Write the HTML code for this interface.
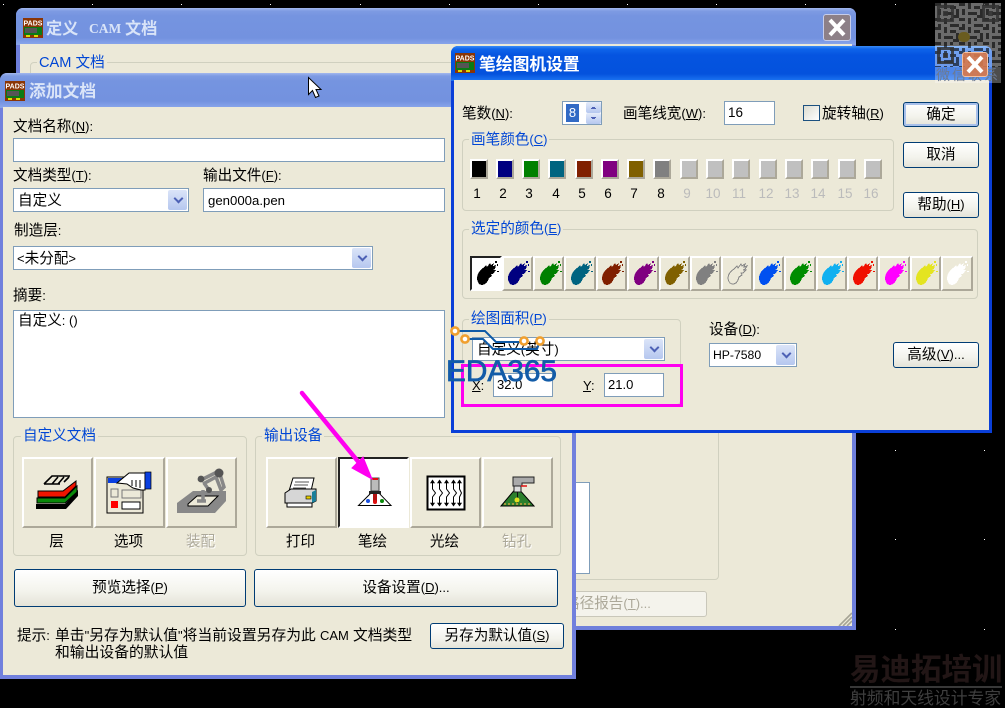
<!DOCTYPE html>
<html lang="zh"><head><meta charset="utf-8"><title>笔绘图机设置</title>
<style>
html,body{margin:0;padding:0;background:#000;}
body{position:relative;width:1005px;height:708px;overflow:hidden;font-family:"Liberation Sans","WenQuanYi Zen Hei","Noto Sans CJK SC",sans-serif;font-size:14.6px;color:#000;}
div,span.t,svg.a{position:absolute;box-sizing:border-box;}
.t{position:absolute;white-space:nowrap;line-height:18px;margin-top:1px;}
.g{color:#0046d5;background:#ece9d8;padding:0 2px;}
.gb{border:1px solid #d0d0bf;border-radius:4px;}
.w{background:#ece9d8;}
.i{background:#fff;border:1px solid #7f9db9;}
.b{border:1px solid #003c74;border-radius:3px;background:linear-gradient(#fff,#f3f3ec 60%,#e4e3d8);text-align:center;line-height:24px;}
.d{background:linear-gradient(#dbe4f8,#b5c7ef);border-radius:2px;}
.d:after{content:"";position:absolute;left:50%;top:50%;width:5px;height:5px;margin:-5px 0 0 -3px;border-right:2px solid #4d61b5;border-bottom:2px solid #4d61b5;transform:rotate(45deg);}
.ib{background:#ece9d8;border:2px solid;border-color:#fff #aca899 #aca899 #fff;}
.sel{background:#fff;border-color:#222 #fff #fff #222;}
.c{text-align:center;}
i{font-style:normal;font-size:13px;}
u{text-decoration:underline;}
.sw{width:18px;height:20px;border:2px solid;border-color:#fff #aca899 #aca899 #fff;}
.n{width:26px;text-align:center;top:184px;font-size:13.500px;}
.bt{font-size:16.2px;font-weight:bold;color:#d9e4f8;}
</style></head><body>

<svg class="a" style="left:0;top:0" width="1005" height="708"><path stroke="#fff" stroke-width="1" d="M3 4.5h1M92 4.5h1M181 4.5h1M270 4.5h1M360 4.5h1M449 4.5h1M538 4.5h1M627 4.5h1M716 4.5h1M805 4.5h1M895 4.5h1M984 4.5h1M895 450.5h1M984 450.5h1M895 539.5h1M984 539.5h1M895 629.5h1M984 629.5h1"/></svg>

<!-- back window -->
<div style="left:16px;top:8px;width:840px;height:622px;background:#6e7fdb;border-radius:7px 7px 0 0;"></div>
<div style="left:16px;top:8px;width:840px;height:37px;border-radius:7px 7px 0 0;background:linear-gradient(#a3b8ee 0,#7e9be3 3px,#7594e0 8px,#7392df 30px,#87a4ea 36px);"></div>
<div class="w" style="left:20px;top:44px;width:832px;height:582px;"></div>
<svg class="a" style="left:23px;top:18px" width="20" height="20"><rect width="20" height="20" fill="#8a3505"/><rect y="9" x="1" width="18" height="8" fill="#0a7a14"/><rect x="2" y="10" width="12" height="5" fill="#555"/><rect x="3" y="17" width="4" height="2" fill="#dd0"/><rect x="11" y="17" width="4" height="2" fill="#dd0"/><text x="10" y="7.5" font-size="7" font-family="Liberation Sans" font-weight="bold" fill="#fff" text-anchor="middle">PADS</text></svg>
<span class="t bt" style="left:46px;top:19px;">定义</span>
<span class="t bt" style="left:89px;top:19px;font-family:'Liberation Serif',serif;font-size:13.500px;">CAM</span>
<span class="t bt" style="left:125px;top:19px;">文档</span>
<div style="left:823px;top:14px;width:28px;height:27px;background:#8d8088;border:1px solid #c7cdea;border-radius:3px;"></div>
<svg class="a" style="left:823px;top:14px" width="28" height="27"><path d="M7 6L21 21M21 6L7 21" stroke="#fff" stroke-width="4"/></svg>
<div class="gb" style="left:30px;top:62px;width:689px;height:518px;"></div>
<span class="t g" style="left:37px;top:53px;">CAM 文档</span>
<div class="i" style="left:540px;top:482px;width:50px;height:92px;"></div>
<div style="left:540px;top:591px;width:167px;height:26px;background:#f4f3ec;border:1px solid #c9c7ba;border-radius:3px;"></div>
<span class="t" style="left:565px;top:594px;color:#aca899;">路径报告<i>(<u>T</u>)...</i></span>
<svg class="a" style="left:838px;top:612px" width="14" height="14"><path d="M14 1L1 14M14 5L5 14M14 9L9 14" stroke="#a5a395" stroke-width="1.6"/></svg>

<!-- left window -->
<div style="left:0;top:73px;width:576px;height:606px;background:#7180dd;border-radius:7px 7px 0 0;"></div>
<div style="left:0;top:73px;width:576px;height:35px;border-radius:7px 7px 0 0;background:linear-gradient(#a3b8ee 0,#7e9be3 3px,#7594e0 8px,#7392df 28px,#87a4ea 34px);"></div>
<div class="w" style="left:3px;top:107px;width:569px;height:568px;"></div>
<svg class="a" style="left:5px;top:81px" width="20" height="20"><rect width="20" height="20" fill="#8a3505"/><rect y="9" x="1" width="18" height="8" fill="#0a7a14"/><rect x="2" y="10" width="12" height="5" fill="#555"/><rect x="3" y="17" width="4" height="2" fill="#dd0"/><rect x="11" y="17" width="4" height="2" fill="#dd0"/><text x="10" y="7.5" font-size="7" font-family="Liberation Sans" font-weight="bold" fill="#fff" text-anchor="middle">PADS</text></svg>
<span class="t" style="left:29px;top:82px;font-size:16.8px;font-weight:bold;color:#dbe5f8;">添加文档</span>

<span class="t" style="left:13px;top:117px;">文档名称<i>(<u>N</u>):</i></span>
<div class="i" style="left:13px;top:138px;width:432px;height:24px;"></div>
<span class="t" style="left:13px;top:166px;">文档类型<i>(<u>T</u>):</i></span>
<div class="i" style="left:13px;top:188px;width:176px;height:24px;"></div>
<span class="t" style="left:18px;top:191px;">自定义</span>
<div class="d" style="left:168px;top:190px;width:19px;height:20px;"></div>
<span class="t" style="left:203px;top:166px;">输出文件<i>(<u>F</u>):</i></span>
<div class="i" style="left:203px;top:188px;width:242px;height:24px;"></div>
<span class="t" style="left:208px;top:191px;font-size:13.2px;">gen000a.pen</span>
<span class="t" style="left:14px;top:221px;">制造层<i>:</i></span>
<div class="i" style="left:13px;top:246px;width:360px;height:24px;"></div>
<span class="t" style="left:17px;top:249px;"><i>&lt;</i>未分配<i>&gt;</i></span>
<div class="d" style="left:352px;top:248px;width:19px;height:20px;"></div>
<span class="t" style="left:13px;top:286px;">摘要<i>:</i></span>
<div class="i" style="left:13px;top:310px;width:432px;height:108px;"></div>
<span class="t" style="left:18px;top:311px;">自定义<i>: ()</i></span>

<div class="gb" style="left:13px;top:436px;width:234px;height:120px;"></div>
<span class="t g" style="left:21px;top:426px;">自定义文档</span>
<div class="gb" style="left:255px;top:436px;width:306px;height:120px;"></div>
<span class="t g" style="left:262px;top:426px;">输出设备</span>

<div class="ib" style="left:22px;top:457px;width:71px;height:71px;"></div>
<div class="ib" style="left:94px;top:457px;width:71px;height:71px;"></div>
<div class="ib" style="left:166px;top:457px;width:71px;height:71px;"></div>
<div class="ib" style="left:266px;top:457px;width:71px;height:71px;"></div>
<div class="ib sel" style="left:338px;top:457px;width:71px;height:71px;"></div>
<div class="ib" style="left:410px;top:457px;width:71px;height:71px;"></div>
<div class="ib" style="left:482px;top:457px;width:71px;height:71px;"></div>

<svg class="a" style="left:0;top:0" width="1005" height="708">
<!-- layers -->
<path d="M36 504H65L78 490V496L66 509H36Z" fill="#000"/>
<path d="M37 498H65L77 486V492L65 503H37Z" fill="#0a8a0a" stroke="#000"/>
<path d="M38 491H63L76 481V486L65 497H38Z" fill="#f01400" stroke="#000"/>
<path d="M44 484l8-8h18M52 484l6-7M58 484l6-7M64 482l5-5M44 484h16" fill="none" stroke="#000" stroke-width="1.6"/>
<!-- options -->
<rect x="107" y="477" width="36" height="36" fill="#ece9d8" stroke="#000"/>
<rect x="108" y="478" width="14" height="5" fill="#0a3fe0"/>
<rect x="111" y="489" width="7" height="8" fill="none" stroke="#777"/>
<rect x="122" y="490" width="19" height="8" fill="none" stroke="#777"/>
<rect x="111" y="501" width="7" height="7" fill="#f00"/>
<rect x="122" y="502" width="18" height="7" fill="#fff" stroke="#000"/>
<path d="M117 483L129 473H145V490H141L133 488L127 484Z" fill="#fff" stroke="#000"/>
<path d="M132 480v6M136 480v7M140 480v8" stroke="#000"/>
<rect x="145" y="472" width="6" height="17" fill="#0a3fe0" stroke="#000" stroke-width=".7"/>
<!-- assembly -->
<path d="M177 513V503L193 491H226V501L215 513Z" fill="#888"/>
<path d="M188 504L197 496H218L208 506H188Z" fill="#ece9d8" stroke="#000"/>
<path d="M201 480L219 471L224 487L221 490L216 477L203 484M204 483L209 490M203 490V501M197 501H206" stroke="#888" stroke-width="3.5" fill="none"/>
<circle cx="219" cy="473" r="4.5" fill="#555"/><circle cx="201" cy="479" r="3.4" fill="#555"/><circle cx="209" cy="490" r="3" fill="#555"/>
<!-- printer -->
<path d="M293 478H314L311 491H289Z" fill="#fff" stroke="#000"/>
<path d="M295 482h14M294 485h14M293 488h13" stroke="#555"/>
<path d="M285 493L291 489H316V501L312 503H285Z" fill="#d6d6d6" stroke="#000"/>
<path d="M312 492l4-2V501l-4 2Z" fill="#1a7f9a"/>
<rect x="306" y="496" width="5" height="3" fill="#e8d000" stroke="#000" stroke-width=".6"/>
<rect x="287" y="503" width="25" height="4" fill="#fff" stroke="#000"/>
<!-- pen -->
<path d="M358.500 505.500H391L375 489Z" fill="#fff" stroke="#000"/>
<rect x="371" y="478" width="8" height="13" fill="#bbb" stroke="#444"/>
<rect x="372" y="478" width="6" height="2" fill="#e01010"/>
<rect x="369" y="491" width="12" height="3" fill="#222"/>
<rect x="373" y="494" width="4" height="8" fill="#b01010"/>
<circle cx="368" cy="501" r="2" fill="#1a50e0"/><circle cx="375" cy="502" r="2" fill="#e01010"/><circle cx="382" cy="501" r="2" fill="#0a8a0a"/>
<!-- photo -->
<rect x="427.500" y="476.500" width="37" height="33" fill="#fff" stroke="#000" stroke-width="2"/>
<path d="M432.500 481v8l3 4-3 4v8M439.500 481v8l3 4-3 4v8M446.500 481v8l3 4-3 4v8M453.500 481v8l3 4-3 4v8M459.500 481v8l2 4-2 4v8" fill="none" stroke="#000"/>
<path d="M430.500 483l2-3 2 3ZM437.500 483l2-3 2 3ZM444.500 483l2-3 2 3ZM451.500 483l2-3 2 3ZM457.500 483l2-3 2 3ZM430.500 503l2 3 2-3ZM437.500 503l2 3 2-3ZM444.500 503l2 3 2-3ZM451.500 503l2 3 2-3ZM457.500 503l2 3 2-3Z" fill="#000" stroke="#000" stroke-width=".6"/>
<!-- drill -->
<path d="M501 506L517 487L534 506Z" fill="#2c7f2c" stroke="#000"/>
<path d="M504 504h26" stroke="#c9a040" stroke-dasharray="2 2" stroke-width="1.500"/>
<path d="M513 477H534V483H522V486H513Z" fill="#aaa" stroke="#222"/>
<rect x="514" y="486" width="7" height="6" fill="#ddd" stroke="#222"/>
<path d="M521 486h6" stroke="#e01010" stroke-width="1.500"/>
<path d="M517.500 492V503" stroke="#111"/>
<circle cx="517" cy="500" r="2.500" fill="#e0e020"/>
</svg>

<span class="t c" style="left:21px;top:532px;width:71px;">层</span>
<span class="t c" style="left:93px;top:532px;width:71px;">选项</span>
<span class="t c" style="left:165px;top:532px;width:71px;color:#aca899;text-shadow:1px 1px #fff;">装配</span>
<span class="t c" style="left:265px;top:532px;width:71px;">打印</span>
<span class="t c" style="left:337px;top:532px;width:71px;">笔绘</span>
<span class="t c" style="left:409px;top:532px;width:71px;">光绘</span>
<span class="t c" style="left:481px;top:532px;width:71px;color:#aca899;text-shadow:1px 1px #fff;">钻孔</span>

<div class="b" style="left:14px;top:569px;width:232px;height:38px;line-height:36px;">预览选择<i>(<u>P</u>)</i></div>
<div class="b" style="left:254px;top:569px;width:304px;height:38px;line-height:36px;">设备设置<i>(<u>D</u>)...</i></div>
<span class="t" style="left:17px;top:626px;">提示<i>:</i></span>
<span class="t" style="left:55px;top:626px;font-size:14.8px;">单击<i>"</i>另存为默认值<i>"</i>将当前设置另存为此 <i>CAM</i> 文档类型</span>
<span class="t" style="left:55px;top:643px;font-size:14.8px;">和输出设备的默认值</span>
<div class="b" style="left:430px;top:623px;width:134px;height:26px;">另存为默认值<i>(<u>S</u>)</i></div>

<!-- right window -->
<div style="left:451px;top:46px;width:541px;height:387px;background:#0a3fd8;border-radius:7px 7px 0 0;"></div>
<div style="left:451px;top:46px;width:541px;height:35px;border-radius:7px 7px 0 0;background:linear-gradient(#3a8cf5 0,#0f64ea 3px,#0554e0 9px,#0452dd 28px,#1a70f0 34px);"></div>
<div class="w" style="left:454px;top:80px;width:535px;height:350px;"></div>
<svg class="a" style="left:455px;top:53px" width="20" height="20"><rect width="20" height="20" fill="#8a3505"/><rect y="9" x="1" width="18" height="8" fill="#0a7a14"/><rect x="2" y="10" width="12" height="5" fill="#555"/><rect x="3" y="17" width="4" height="2" fill="#dd0"/><rect x="11" y="17" width="4" height="2" fill="#dd0"/><text x="10" y="7.5" font-size="7" font-family="Liberation Sans" font-weight="bold" fill="#fff" text-anchor="middle">PADS</text></svg>
<span class="t" style="left:479px;top:55px;font-size:16.8px;font-weight:bold;color:#fff;">笔绘图机设置</span>

<span class="t" style="left:462px;top:104px;">笔数<i>(<u>N</u>):</i></span>
<div class="i" style="left:562px;top:101px;width:40px;height:24px;"></div>
<div style="left:566px;top:104px;width:13px;height:18px;background:#316ac5;color:#fff;text-align:center;line-height:18px;font-size:13px;">8</div>
<div style="left:586px;top:102px;width:15px;height:11px;background:linear-gradient(#e4ebfa,#b5c7ef);border-radius:2px;"></div>
<div style="left:586px;top:113px;width:15px;height:11px;background:linear-gradient(#e4ebfa,#b5c7ef);border-radius:2px;"></div>
<svg class="a" style="left:586px;top:102px" width="15" height="22"><path d="M5 6.500h5M6 5.500h3M5 15.500h5M6 16.500h3" stroke="#4d61b5"/></svg>
<span class="t" style="left:623px;top:104px;">画笔线宽<i>(<u>W</u>):</i></span>
<div class="i" style="left:724px;top:101px;width:51px;height:24px;"></div>
<span class="t" style="left:728px;top:103px;font-size:13.500px;">16</span>
<div style="left:803px;top:105px;width:17px;height:16px;border:1px solid #1c5180;background:linear-gradient(135deg,#dcdcd0,#fff);"></div>
<span class="t" style="left:822px;top:104px;">旋转轴<i>(<u>R</u>)</i></span>
<div class="b" style="left:903px;top:102px;width:76px;height:25px;box-shadow:inset 0 0 0 2px #a8c0ea;">确定</div>
<div class="b" style="left:903px;top:142px;width:76px;height:26px;">取消</div>
<div class="b" style="left:903px;top:192px;width:76px;height:26px;">帮助<i>(<u>H</u>)</i></div>

<div class="gb" style="left:462px;top:139px;width:432px;height:72px;"></div>
<span class="t g" style="left:469px;top:130px;">画笔颜色<i>(<u>C</u>)</i></span>
<div class="sw" style="left:470px;top:159px;background:#000;"></div>
<div class="sw" style="left:496px;top:159px;background:#000080;"></div>
<div class="sw" style="left:522px;top:159px;background:#008000;"></div>
<div class="sw" style="left:548px;top:159px;background:#006480;"></div>
<div class="sw" style="left:575px;top:159px;background:#802000;"></div>
<div class="sw" style="left:601px;top:159px;background:#800080;"></div>
<div class="sw" style="left:627px;top:159px;background:#806000;"></div>
<div class="sw" style="left:653px;top:159px;background:#808080;"></div>
<div class="sw" style="left:680px;top:159px;background:#c0c0c0;"></div>
<div class="sw" style="left:706px;top:159px;background:#c0c0c0;"></div>
<div class="sw" style="left:732px;top:159px;background:#c0c0c0;"></div>
<div class="sw" style="left:759px;top:159px;background:#c0c0c0;"></div>
<div class="sw" style="left:785px;top:159px;background:#c0c0c0;"></div>
<div class="sw" style="left:811px;top:159px;background:#c0c0c0;"></div>
<div class="sw" style="left:838px;top:159px;background:#c0c0c0;"></div>
<div class="sw" style="left:864px;top:159px;background:#c0c0c0;"></div>
<span class="t n" style="left:464px;">1</span><span class="t n" style="left:490px;">2</span><span class="t n" style="left:516px;">3</span><span class="t n" style="left:543px;">4</span><span class="t n" style="left:569px;">5</span><span class="t n" style="left:595px;">6</span><span class="t n" style="left:621px;">7</span><span class="t n" style="left:648px;">8</span>
<span class="t n" style="left:674px;color:#bbb;">9</span><span class="t n" style="left:700px;color:#bbb;">10</span><span class="t n" style="left:726px;color:#bbb;">11</span><span class="t n" style="left:753px;color:#bbb;">12</span><span class="t n" style="left:779px;color:#bbb;">13</span><span class="t n" style="left:805px;color:#bbb;">14</span><span class="t n" style="left:832px;color:#bbb;">15</span><span class="t n" style="left:858px;color:#bbb;">16</span>

<div class="gb" style="left:462px;top:229px;width:516px;height:70px;"></div>
<span class="t g" style="left:469px;top:219px;">选定的颜色<i>(<u>E</u>)</i></span>

<svg width="0" height="0" style="position:absolute"><defs>
<path id="m" d="M5 21C5 17 8 13 11 11L14 8L15 10L18 6L19 8L22 6L21 9L24 8L23 12L21 13L24 13L21 17L19 17L20 19L17 21C16 25 13 28 10 28C7 28 5 25 5 21ZM23 4h2v2h-2ZM25 7h1v2h-1ZM25 14h2v1h-2Z" fill="currentColor"/>
<path id="mo" d="M5 21C5 17 8 14 11 12L14 9L15 11L18 7L19 9L22 7L21 10L24 9L22 12L20 13L23 13L20 16L18 16L19 18L16 20C15 24 13 27 10 27C7 27 5 24 5 21Z" fill="none" stroke="#888"/>
</defs></svg>
<div class="ib sel" style="left:470px;top:256px;width:32px;height:35px;"></div>
<div class="ib" style="left:502px;top:256px;width:31px;height:35px;"></div>
<div class="ib" style="left:533px;top:256px;width:31px;height:35px;"></div>
<div class="ib" style="left:564px;top:256px;width:32px;height:35px;"></div>
<div class="ib" style="left:596px;top:256px;width:31px;height:35px;"></div>
<div class="ib" style="left:627px;top:256px;width:32px;height:35px;"></div>
<div class="ib" style="left:659px;top:256px;width:31px;height:35px;"></div>
<div class="ib" style="left:690px;top:256px;width:31px;height:35px;"></div>
<div class="ib" style="left:721px;top:256px;width:32px;height:35px;"></div>
<div class="ib" style="left:753px;top:256px;width:31px;height:35px;"></div>
<div class="ib" style="left:784px;top:256px;width:32px;height:35px;"></div>
<div class="ib" style="left:816px;top:256px;width:31px;height:35px;"></div>
<div class="ib" style="left:847px;top:256px;width:31px;height:35px;"></div>
<div class="ib" style="left:878px;top:256px;width:32px;height:35px;"></div>
<div class="ib" style="left:910px;top:256px;width:31px;height:35px;"></div>
<div class="ib" style="left:941px;top:256px;width:32px;height:35px;"></div>
<svg class="a" style="left:0;top:0" width="1005" height="708" shape-rendering="crispEdges">
<use href="#m" x="472" y="257" color="#000"/>
<use href="#m" x="503" y="257" color="#000080"/>
<use href="#m" x="535" y="257" color="#008000"/>
<use href="#m" x="566" y="257" color="#006480"/>
<use href="#m" x="597" y="257" color="#802000"/>
<use href="#m" x="629" y="257" color="#800080"/>
<use href="#m" x="660" y="257" color="#806000"/>
<use href="#m" x="691" y="257" color="#808080"/>
<use href="#mo" x="723" y="257"/>
<use href="#m" x="754" y="257" color="#0050f0"/>
<use href="#m" x="785" y="257" color="#008c00"/>
<use href="#m" x="817" y="257" color="#10b0f0"/>
<use href="#m" x="848" y="257" color="#f01000"/>
<use href="#m" x="880" y="257" color="#ff00ff"/>
<use href="#m" x="911" y="257" color="#e4e420"/>
<use href="#m" x="942" y="257" color="#fff"/>
</svg>

<div class="gb" style="left:462px;top:319px;width:219px;height:86px;"></div>
<span class="t g" style="left:469px;top:309px;">绘图面积<i>(<u>P</u>)</i></span>
<div class="i" style="left:472px;top:337px;width:193px;height:24px;"></div>
<span class="t" style="left:477px;top:340px;">自定义<i>(</i>英寸<i>)</i></span>
<div class="d" style="left:644px;top:339px;width:19px;height:20px;"></div>
<span class="t" style="left:472px;top:376px;"><i><u>X</u>:</i></span>
<div class="i" style="left:493px;top:373px;width:60px;height:24px;"></div>
<span class="t" style="left:497px;top:375px;font-size:13px;">32.0</span>
<span class="t" style="left:583px;top:376px;"><i><u>Y</u>:</i></span>
<div class="i" style="left:604px;top:373px;width:60px;height:24px;"></div>
<span class="t" style="left:608px;top:375px;font-size:13px;">21.0</span>
<span class="t" style="left:709px;top:320px;">设备<i>(<u>D</u>):</i></span>
<div class="i" style="left:709px;top:343px;width:88px;height:24px;"></div>
<span class="t" style="left:713px;top:345px;font-size:12.2px;">HP-7580</span>
<div class="d" style="left:776px;top:345px;width:19px;height:20px;"></div>
<div class="b" style="left:893px;top:342px;width:86px;height:26px;">高级<i>(<u>V</u>)...</i></div>

<!-- magenta rect -->
<div style="left:461px;top:364px;width:222px;height:43px;border:3px solid #ff00f0;"></div>

<!-- logo overlay -->
<svg class="a" style="left:0;top:0" width="1005" height="708">
<path d="M455 331H485L496 342H524M465 339H483L493 349H537L540 341" fill="none" stroke="#0f5aa6" stroke-width="2"/>
<circle cx="455" cy="331" r="3.600" fill="#fff" stroke="#f0a030" stroke-width="2.600"/>
<circle cx="465" cy="339" r="3.600" fill="#fff" stroke="#f0a030" stroke-width="2.600"/>
<circle cx="524" cy="341" r="3.600" fill="#fff" stroke="#f0a030" stroke-width="2.600"/>
<circle cx="540" cy="341" r="3.600" fill="#fff" stroke="#f0a030" stroke-width="2.600"/>
<text x="446" y="381" font-family="Liberation Sans" font-size="29.500" fill="#135ca8" stroke="#135ca8" stroke-width=".7" textLength="111" lengthAdjust="spacingAndGlyphs">EDA365</text>
<!-- arrow -->
<path d="M302 393L365 470" stroke="#ff00f0" stroke-width="4.500" fill="none" stroke-linecap="round"/>
<path d="M372 479L352 468L363 457Z" fill="#ff00f0" stroke="#ff00f0" stroke-width="1"/>
<!-- cursor -->
<path d="M308.500 77.500V94.500L312.500 90.500L315.500 97.500L319 96L316 89.500H321Z" fill="#fff" stroke="#000"/>
</svg>

<!-- QR overlay -->
<svg class="a" style="left:935px;top:3px;" width="66" height="80" viewBox="0 0 66 80">
<defs><pattern id="q" width="24" height="24" patternUnits="userSpaceOnUse">
<rect width="24" height="24" fill="rgba(255,255,255,.42)"/>
<path d="M0 0h6v3H0ZM9 0h3v6H9ZM15 3h6v3h-6ZM3 6h3v6H3ZM9 9h9v3H9ZM21 6h3v9h-3ZM0 15h6v3H0ZM9 15h3v6H9ZM15 15h3v3h-3ZM3 21h3v3H3ZM15 21h9v3h-9ZM18 12h3v3h-3Z" fill="rgba(0,0,0,.6)"/>
</pattern></defs>
<rect width="66" height="64" fill="url(#q)"/>
<rect y="64" width="66" height="16" fill="rgba(255,255,255,.3)"/>
<path d="M2 2h17v17H2ZM5 5v11h11V5ZM8 8h5v5H8ZM47 2h17v17H47ZM50 5v11h11V5ZM53 8h5v5h-5ZM2 44h17v17H2ZM5 47v11h11V47ZM8 50h5v5H8Z" fill="#333" fill-rule="evenodd" opacity=".85"/>
<rect x="23" y="29" width="12" height="10" rx="5" fill="#6a5c20"/>
<text x="33" y="77" text-anchor="middle" font-size="14" letter-spacing="2" font-family="WenQuanYi Zen Hei" fill="#6d7a90">微信联系</text>
</svg>
<div style="left:962px;top:52px;width:26px;height:25px;background:rgba(217,121,74,.9);border:1px solid #f4c0a0;border-radius:3px;"></div>
<svg class="a" style="left:962px;top:52px" width="26" height="25"><path d="M6 5L20 20M20 5L6 20" stroke="#fff" stroke-width="4"/></svg>

<!-- watermark -->
<span class="t" style="left:850px;top:653px;font-size:30.500px;font-weight:bold;line-height:32px;color:#221616;">易迪拓培训</span>
<div style="left:850px;top:686px;width:152px;height:2px;background:#383838;"></div>
<span class="t" style="left:850px;top:689px;font-size:16.800px;line-height:18px;color:#3f3f3f;">射频和天线设计专家</span>
</body></html>
